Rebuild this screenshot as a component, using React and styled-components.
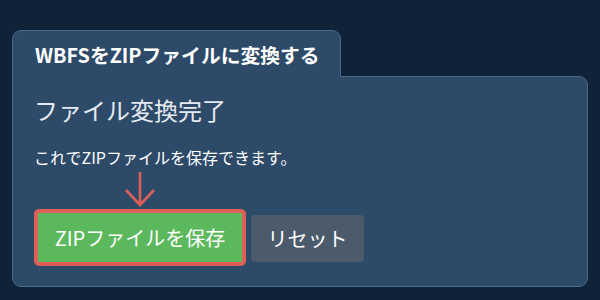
import React from "react";
import styled, { createGlobalStyle } from "styled-components";

const GlobalStyle = createGlobalStyle`
  html, body {
    margin: 0;
    padding: 0;
    background: #0f2237;
    font-family: "Noto Sans CJK JP", "Noto Sans", sans-serif;
  }
`;

function App() {
  return (
    <>
      <GlobalStyle />
      <Page>
        <Tab>WBFSをZIPファイルに変換する</Tab>
        <Panel>
          <Heading>ファイル変換完了</Heading>
          <Message>これでZIPファイルを保存できます。</Message>
          <ButtonRow>
            <Highlight>
              <Arrow width="30" height="36" viewBox="0 0 30 36">
                <path
                  d="M15 0 V34 M1 18 L15 33 L29 18"
                  fill="none"
                  stroke="#dd5f58"
                  strokeWidth="2.6"
                />
              </Arrow>
              <SaveButton>ZIPファイルを保存</SaveButton>
            </Highlight>
            <ResetButton>リセット</ResetButton>
          </ButtonRow>
        </Panel>
      </Page>
    </>
  );
}

const Page = styled.div`
  padding: 30px 12px 0 12px;
  display: flex;
  flex-direction: column;
  align-items: flex-start;
`;

const Tab = styled.div`
  position: relative;
  z-index: 1;
  box-sizing: border-box;
  width: 329px;
  height: 47px;
  margin-bottom: -1px;
  padding: 0 22px;
  display: flex;
  align-items: center;
  background: #2d4a69;
  border: 1px solid #4b6889;
  border-bottom: none;
  border-radius: 9px 9px 0 0;
  color: #ffffff;
  font-size: 19.8px;
  font-weight: 700;
  white-space: nowrap;
`;

const Panel = styled.div`
  box-sizing: border-box;
  width: 576px;
  height: 211px;
  padding: 17px 22px 0 21px;
  background: #2d4a69;
  border: 1px solid #4b6889;
  border-radius: 0 9px 9px 9px;
`;

const Heading = styled.h2`
  margin: 0;
  color: #e6ebf1;
  font-size: 24px;
  font-weight: 400;
  line-height: 32px;
`;

const Message = styled.p`
  margin: 21px 0 0 0;
  color: #ffffff;
  font-size: 16px;
  line-height: 20px;
`;

const ButtonRow = styled.div`
  display: flex;
  align-items: flex-end;
  gap: 5px;
`;

const Highlight = styled.div`
  display: flex;
  flex-direction: column;
  align-items: center;
`;

const Arrow = styled.svg`
  display: block;
  margin: 5px 0 1px 0;
`;

const BaseButton = styled.button`
  box-sizing: border-box;
  height: 47px;
  padding: 0;
  border: none;
  border-radius: 4px;
  color: #ffffff;
  font-family: "Noto Sans CJK JP", "Noto Sans", sans-serif;
  font-size: 20px;
  font-weight: 400;
  cursor: pointer;
`;

const SaveButton = styled(BaseButton)`
  width: 212px;
  height: 57px;
  background: #5cb85c;
  border: 4px solid #dd5f58;
  border-radius: 5px;
`;

const ResetButton = styled(BaseButton)`
  width: 113px;
  margin-bottom: 4px;
  background: #4b5b6c;
`;

export default App;
